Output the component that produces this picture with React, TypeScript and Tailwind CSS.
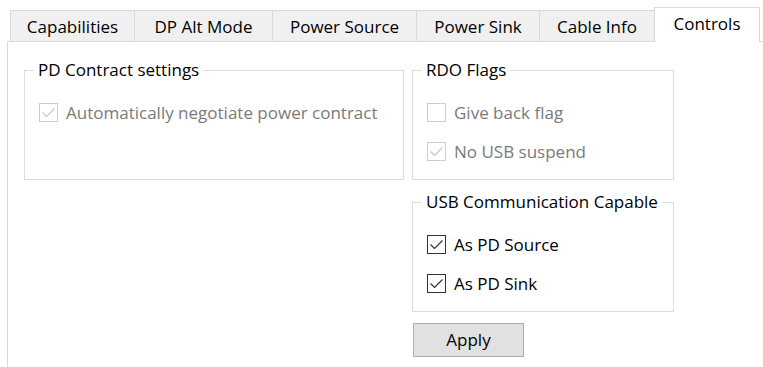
import React from "react";

const tabs = [
  { label: "Capabilities", w: "w-[124px]" },
  { label: "DP Alt Mode", w: "w-[138px]" },
  { label: "Power Source", w: "w-[144px]" },
  { label: "Power Sink", w: "w-[123px]" },
  { label: "Cable Info", w: "w-[115px]" },
];

function Check({ checked, disabled }: { checked: boolean; disabled?: boolean }) {
  const border = disabled ? "border-[#cccccc]" : "border-[#333333]";
  const stroke = disabled ? "#c6c6c6" : "#333333";
  return (
    <div className={`w-[19px] h-[19px] border ${border} bg-white flex items-center justify-center shrink-0`}>
      {checked && (
        <svg width="17" height="17" viewBox="0 0 17 17">
          <path d="M2.5 8.5 L6.5 12.5 L14.5 4.5" fill="none" stroke={stroke} strokeWidth="1.2" />
        </svg>
      )}
    </div>
  );
}

function Row({ label, checked, disabled }: { label: string; checked: boolean; disabled?: boolean }) {
  return (
    <div className="h-[39px] flex items-center pl-[14px] gap-[8px]">
      <Check checked={checked} disabled={disabled} />
      <span className={disabled ? "text-[#7a7a7a]" : "text-black"}>{label}</span>
    </div>
  );
}

function Group({ title, children, className = "" }: { title: string; children: React.ReactNode; className?: string }) {
  return (
    <fieldset className={`border border-[#dcdcdc] pt-[12px] pb-[8px] ${className}`}>
      <legend className="ml-[9px] px-[4px] leading-[22px] text-black">{title}</legend>
      {children}
    </fieldset>
  );
}

export default function App() {
  return (
    <div
      className="w-[763px] h-[367px] bg-white overflow-hidden text-[17px] leading-[22px]"
      style={{ fontFamily: '"Open Sans", "Noto Sans", sans-serif' }}
    >
      <div className="flex items-end h-[41px] pl-[10px]">
        {tabs.map((t) => (
          <div
            key={t.label}
            className={`${t.w} h-[31px] border-l border-t border-[#d9d9d9] bg-[#f0f0f0] flex items-center justify-center text-black pt-px`}
          >
            {t.label}
          </div>
        ))}
        <div className="w-[106px] h-[35px] border-l border-t border-r border-[#d9d9d9] bg-white flex items-center justify-center text-black relative z-10 -mb-px pb-[2px]">
          Controls
        </div>
      </div>
      <div className="ml-[7px] border-l border-t border-[#d9d9d9] h-[400px] pt-[17px] pl-[16px] flex gap-[8px]">
        <div className="w-[380px]">
          <Group title="PD Contract settings">
            <Row label="Automatically negotiate power contract" checked disabled />
            <div className="h-[39px]" />
          </Group>
        </div>
        <div className="w-[262px] flex flex-col">
          <Group title="RDO Flags">
            <Row label="Give back flag" checked={false} disabled />
            <Row label="No USB suspend" checked disabled />
          </Group>
          <Group title="USB Communication Capable" className="mt-[11px]">
            <Row label="As PD Source" checked />
            <Row label="As PD Sink" checked />
          </Group>
          <button className="mt-[11px] ml-px w-[111px] h-[34px] border border-[#adadad] bg-[#e1e1e1] text-black flex items-center justify-center">
            Apply
          </button>
        </div>
      </div>
    </div>
  );
}
